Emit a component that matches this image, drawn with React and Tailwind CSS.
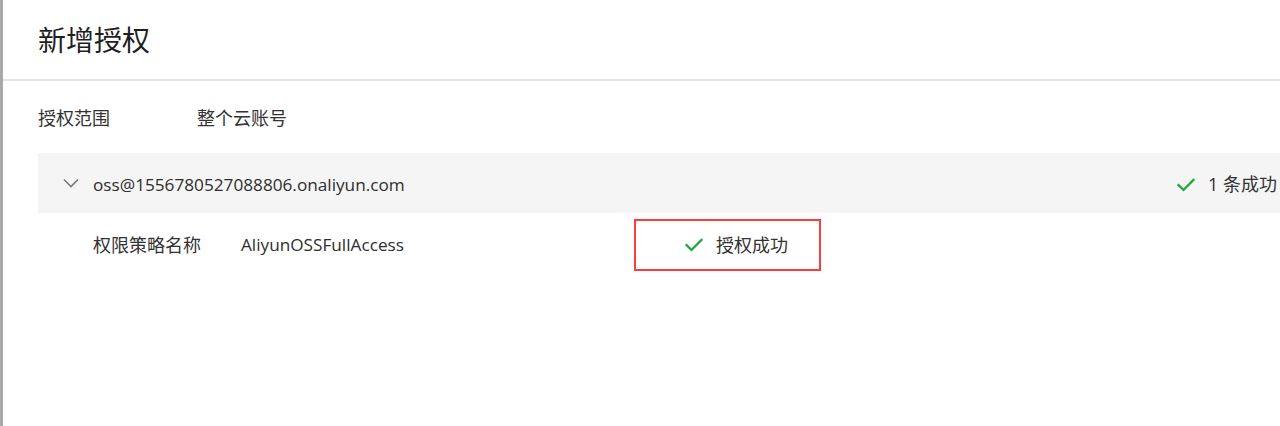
import React from "react";

function Check({ className = "" }) {
  return (
    <svg className={className} width="18" height="14" viewBox="0 0 18 14" fill="none">
      <path d="M1.5 7.2 L6.5 12 L16.5 1.8" stroke="#22a83a" strokeWidth="2.3" strokeLinecap="square" />
    </svg>
  );
}

export default function App() {
  const font = { fontFamily: '"Open Sans", "Noto Sans CJK SC", sans-serif' };
  return (
    <div className="flex w-[1280px] h-[426px] overflow-hidden bg-white text-[#333]" style={font}>
      <div className="w-[3px] shrink-0 bg-[#a8a8a8]" />
      <div className="flex-1 flex flex-col min-w-0">
        <div className="h-[79px] flex items-center pl-[35px] text-[28px] text-[#1f1f1f]">新增授权</div>
        <div className="h-[2px] bg-[#e3e3e3]" />
        <div className="pl-[35px] flex flex-col">
          <div className="mt-[25px] h-[24px] flex items-center text-[18px]">
            <span className="w-[159px]">授权范围</span>
            <span>整个云账号</span>
          </div>
          <div className="mt-[23px] h-[60px] bg-[#f5f5f5] flex items-center pt-[3px]">
            <svg className="ml-[25px] mr-[14px] mb-[3px]" width="16" height="10" viewBox="0 0 16 10" fill="none">
              <path d="M1 1.5 L8 8.5 L15 1.5" stroke="#7a7a7a" strokeWidth="1.6" />
            </svg>
            <span className="text-[17.2px] text-[#2e2e2e]">oss@1556780527088806.onaliyun.com</span>
            <div className="ml-auto flex items-center shrink-0 mr-[3px]">
              <Check />
              <span className="ml-[13px] text-[18px]">1 条成功</span>
            </div>
          </div>
          <div className="flex items-start pl-[55px] text-[18px]">
            <span className="w-[148px] mt-[20px] leading-[24px]">权限策略名称</span>
            <span className="w-[393px] mt-[20px] leading-[24px] text-[17.2px] text-[#2e2e2e]">AliyunOSSFullAccess</span>
            <div className="mt-[6px] w-[187px] h-[52px] border-2 border-[#ff3b3b] flex items-center pl-[49px]">
              <Check />
              <span className="ml-[13px]">授权成功</span>
            </div>
          </div>
        </div>
      </div>
    </div>
  );
}
